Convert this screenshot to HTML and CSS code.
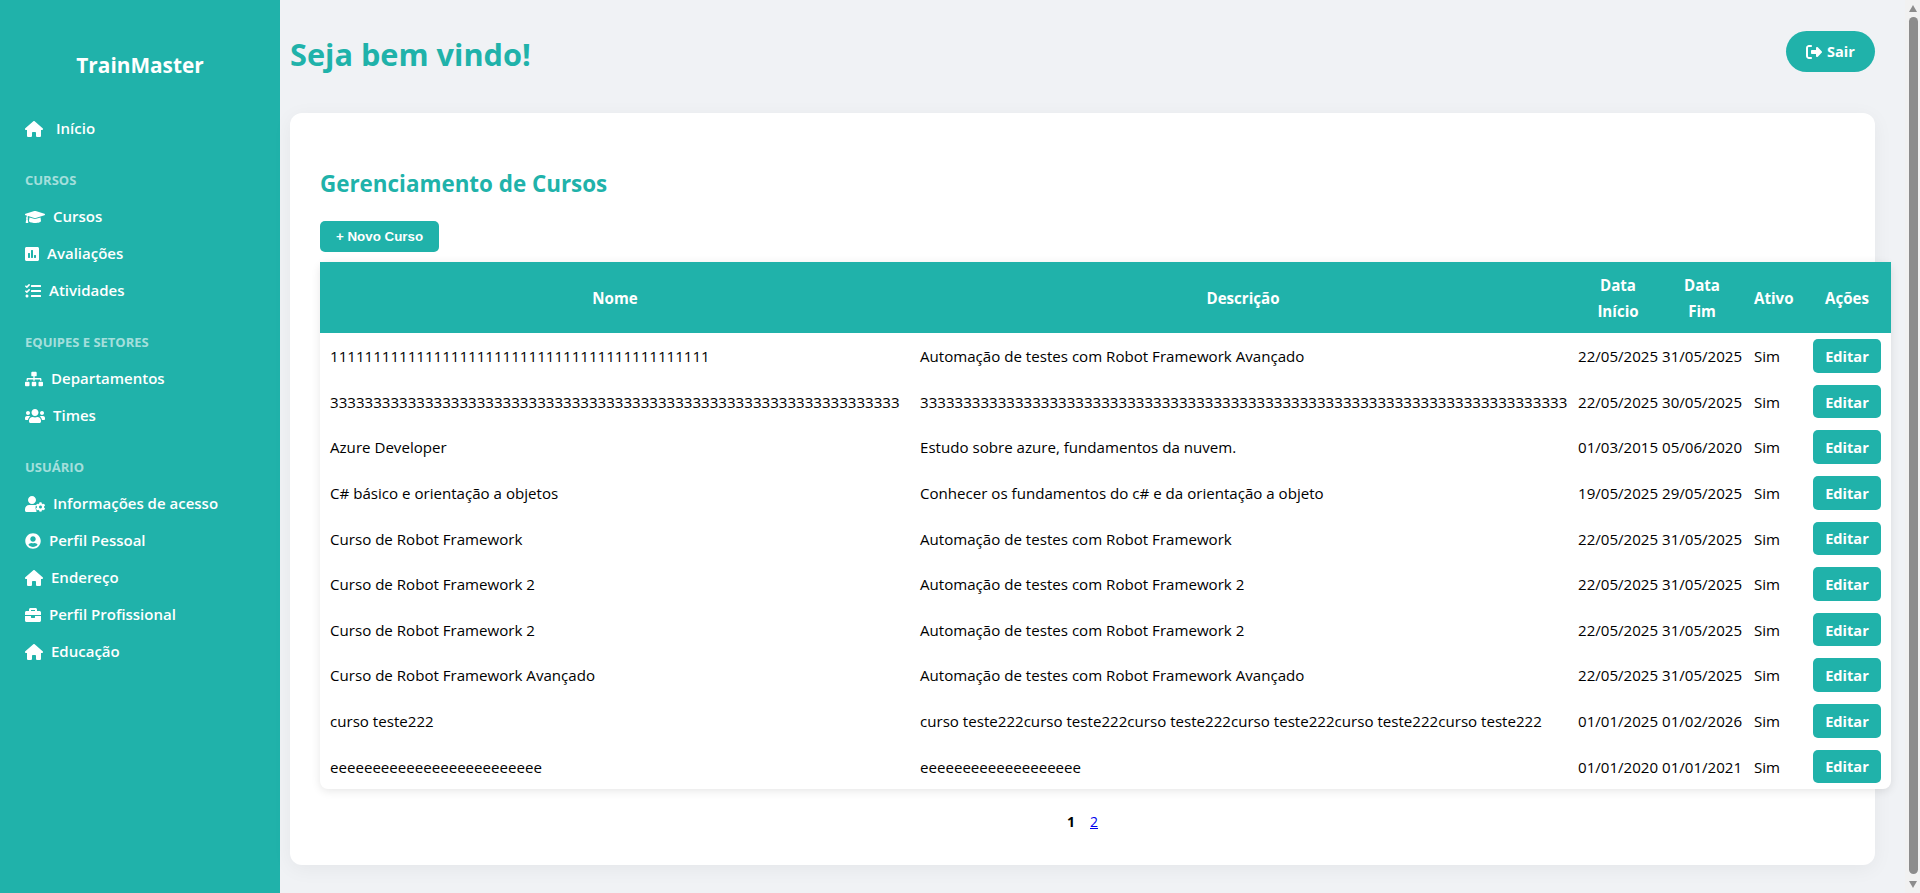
FILE: index.html
```html
<!DOCTYPE html>
<html lang="pt-br">
<head>
    <meta charset="UTF-8">
    <meta name="viewport" content="width=device-width, initial-scale=1.0">
    <title>TrainMaster - Cursos</title>
    <link rel="stylesheet" href="styles.css">
</head>
<body>
    <svg class="sprite" xmlns="http://www.w3.org/2000/svg">
        <symbol id="i-home" viewBox="0 0 576 512"><path d="M575.8 255.5c0 18-15 32.1-32 32.1h-32l.7 160.2c0 2.7-.2 5.4-.5 8.1V472c0 22.1-17.9 40-40 40H456c-1.1 0-2.2 0-3.3-.1c-1.4 .1-2.8 .1-4.2 .1H416 392c-22.1 0-40-17.9-40-40V448 384c0-17.7-14.3-32-32-32H256c-17.7 0-32 14.3-32 32v64 24c0 22.1-17.9 40-40 40H160 128.1c-1.5 0-3-.1-4.5-.2c-1.2 .1-2.4 .2-3.6 .2H104c-22.1 0-40-17.9-40-40V360c0-.9 0-1.9 .1-2.8V287.6H32c-18 0-32-14-32-32.1c0-9 3-17 10-24L266.4 8c7-7 15-8 22-8s15 2 21 7L564.8 231.5c8 7 12 15 11 24z"/></symbol>
        <symbol id="i-cap" viewBox="0 0 640 512"><path d="M622.34 153.2L343.4 67.5c-15.2-4.67-31.6-4.67-46.79 0L17.66 153.2c-23.54 7.23-23.54 38.36 0 45.59l48.63 14.94c-10.67 13.19-17.23 29.28-17.88 46.9C38.78 266.15 32 276.11 32 288c0 10.78 5.68 19.85 13.86 25.65L20.33 428.53C18.11 438.52 25.71 448 35.94 448h56.11c10.24 0 17.84-9.48 15.62-19.47L82.14 313.65C90.32 307.85 96 298.78 96 288c0-11.57-6.47-21.25-15.66-26.87.76-15.02 8.44-28.3 20.69-36.72L296.6 284.5c9.06 2.78 26.44 6.25 46.79 0l278.95-85.7c23.55-7.24 23.55-38.36 0-45.6zM352.79 315.09c-28.53 8.76-52.84 3.92-65.59 0l-145.02-44.55L128 384c0 35.35 85.96 64 192 64s192-28.65 192-64l-14.18-113.47-145.03 44.56z"/></symbol>
        <symbol id="i-poll" viewBox="0 0 448 512"><path d="M400 32H48C21.5 32 0 53.5 0 80v352c0 26.5 21.5 48 48 48h352c26.5 0 48-21.5 48-48V80c0-26.5-21.5-48-48-48zM160 368c0 8.84-7.16 16-16 16h-32c-8.84 0-16-7.16-16-16V240c0-8.84 7.16-16 16-16h32c8.84 0 16 7.16 16 16v128zm96 0c0 8.84-7.16 16-16 16h-32c-8.84 0-16-7.16-16-16V144c0-8.84 7.16-16 16-16h32c8.84 0 16 7.16 16 16v224zm96 0c0 8.84-7.16 16-16 16h-32c-8.84 0-16-7.16-16-16v-64c0-8.84 7.16-16 16-16h32c8.84 0 16 7.16 16 16v64z"/></symbol>
        <symbol id="i-tasks" viewBox="0 0 512 512"><path d="M139.61 35.5a12 12 0 0 0-17 0L58.93 98.81l-22.7-22.12a12 12 0 0 0-17 0L3.53 92.41a12 12 0 0 0 0 17l47.59 47.4a12.78 12.78 0 0 0 17.61 0l15.59-15.62L156.52 69a12.09 12.09 0 0 0 .09-17zm0 159.19a12 12 0 0 0-17 0l-63.68 63.72-22.7-22.1a12 12 0 0 0-17 0L3.53 252a12 12 0 0 0 0 17L51 316.5a12.77 12.77 0 0 0 17.6 0l15.7-15.69 72.2-72.22a12 12 0 0 0 .09-16.9zM64 368c-26.49 0-48.59 21.5-48.59 48S37.53 464 64 464a48 48 0 0 0 0-96zm432 16H208a16 16 0 0 0-16 16v32a16 16 0 0 0 16 16h288a16 16 0 0 0 16-16v-32a16 16 0 0 0-16-16zm0-320H208a16 16 0 0 0-16 16v32a16 16 0 0 0 16 16h288a16 16 0 0 0 16-16V80a16 16 0 0 0-16-16zm0 160H208a16 16 0 0 0-16 16v32a16 16 0 0 0 16 16h288a16 16 0 0 0 16-16v-32a16 16 0 0 0-16-16z"/></symbol>
        <symbol id="i-sitemap" viewBox="0 0 640 512"><path d="M128 352H32c-17.67 0-32 14.33-32 32v96c0 17.67 14.33 32 32 32h96c17.67 0 32-14.33 32-32v-96c0-17.67-14.33-32-32-32zm-24-80h192v48h48v-48h192v48h48v-57.59c0-21.17-17.23-38.41-38.41-38.41H344v-64h40c17.67 0 32-14.33 32-32V32c0-17.67-14.33-32-32-32H256c-17.67 0-32 14.33-32 32v96c0 17.67 14.33 32 32 32h40v64H94.41C73.23 224 56 241.23 56 262.41V320h48v-48zm264 80h-96c-17.67 0-32 14.33-32 32v96c0 17.67 14.33 32 32 32h96c17.67 0 32-14.33 32-32v-96c0-17.67-14.33-32-32-32zm240 0h-96c-17.67 0-32 14.33-32 32v96c0 17.67 14.33 32 32 32h96c17.67 0 32-14.33 32-32v-96c0-17.67-14.33-32-32-32z"/></symbol>
        <symbol id="i-users" viewBox="0 0 640 512"><path d="M96 224c35.3 0 64-28.7 64-64s-28.7-64-64-64-64 28.7-64 64 28.7 64 64 64zm448 0c35.3 0 64-28.7 64-64s-28.7-64-64-64-64 28.7-64 64 28.7 64 64 64zm32 32h-64c-17.6 0-33.5 7.1-45.1 18.6 40.3 22.1 68.9 62 75.1 109.4h66c17.7 0 32-14.3 32-32v-32c0-35.3-28.7-64-64-64zm-256 0c61.9 0 112-50.1 112-112S381.9 32 320 32 208 82.1 208 144s50.1 112 112 112zm76.8 32h-8.3c-20.8 10-43.9 16-68.5 16s-47.6-6-68.5-16h-8.3C179.6 288 128 339.6 128 403.2V432c0 26.5 21.5 48 48 48h288c26.5 0 48-21.5 48-48v-28.8c0-63.6-51.6-115.2-115.2-115.2zm-223.7-13.4C161.5 263.1 145.6 256 128 256H64c-35.3 0-64 28.7-64 64v32c0 17.7 14.3 32 32 32h65.9c6.3-47.4 34.9-87.3 75.2-109.4z"/></symbol>
        <symbol id="i-usercog" viewBox="0 0 640 512"><path d="M610.5 373.3c2.6-14.1 2.6-28.5 0-42.6l25.8-14.9c3-1.7 4.3-5.2 3.3-8.5-6.7-21.6-18.2-41.2-33.2-57.4-2.3-2.5-6-3.1-9-1.4l-25.8 14.9c-10.9-9.3-23.4-16.5-36.9-21.3v-29.8c0-3.4-2.4-6.4-5.7-7.1-22.3-5-45-4.8-66.2 0-3.3.7-5.7 3.7-5.7 7.1v29.8c-13.5 4.8-26 12-36.9 21.3l-25.8-14.9c-2.9-1.7-6.7-1.1-9 1.4-15 16.2-26.5 35.8-33.2 57.4-1 3.3.4 6.8 3.3 8.5l25.8 14.9c-2.6 14.1-2.6 28.5 0 42.6l-25.8 14.9c-3 1.7-4.3 5.2-3.3 8.5 6.7 21.6 18.2 41.1 33.2 57.4 2.3 2.5 6 3.1 9 1.4l25.8-14.9c10.9 9.3 23.4 16.5 36.9 21.3v29.8c0 3.4 2.4 6.4 5.7 7.1 22.3 5 45 4.8 66.2 0 3.3-.7 5.7-3.7 5.7-7.1v-29.8c13.5-4.8 26-12 36.9-21.3l25.8 14.9c2.9 1.7 6.7 1.1 9-1.4 15-16.2 26.5-35.8 33.2-57.4 1-3.3-.4-6.8-3.3-8.5l-25.8-14.9zM496 400.5c-26.8 0-48.5-21.8-48.5-48.5s21.8-48.5 48.5-48.5 48.5 21.8 48.5 48.5-21.7 48.5-48.5 48.5zM224 256c70.7 0 128-57.3 128-128S294.7 0 224 0 96 57.3 96 128s57.3 128 128 128zM134.4 288h178c20 0 30 4 45 11-8 18-14 33-20 53 3 18 3 30 0 48 6 22 14 37 26 54v26c0 12 3 22 8 32H48c-26.5 0-48-21.5-48-48v-41.6C0 348.2 60.2 288 134.4 288z"/></symbol>
        <symbol id="i-usercircle" viewBox="0 0 496 512"><path d="M248 8C111 8 0 119 0 256s111 248 248 248 248-111 248-248S385 8 248 8zm0 96c48.6 0 88 39.4 88 88s-39.4 88-88 88-88-39.4-88-88 39.4-88 88-88zm0 344c-58.7 0-111.3-26.6-146.5-68.2 18.8-35.4 55.6-59.8 98.5-59.8 2.4 0 4.8.4 7.1 1.1 13 4.2 26.6 6.9 40.9 6.9 14.3 0 28-2.7 40.9-6.9 2.3-.7 4.7-1.1 7.1-1.1 42.9 0 79.7 24.4 98.5 59.8C359.3 421.4 306.7 448 248 448z"/></symbol>
        <symbol id="i-briefcase" viewBox="0 0 512 512"><path d="M320 336c0 8.84-7.16 16-16 16h-96c-8.84 0-16-7.16-16-16v-48H0v144c0 25.6 22.4 48 48 48h416c25.6 0 48-22.4 48-48V288H320v48zm144-208h-80V80c0-25.6-22.4-48-48-48H176c-25.6 0-48 22.4-48 48v48H48c-25.6 0-48 22.4-48 48v80h512v-80c0-25.6-22.4-48-48-48zm-144 0H192V96h128v32z"/></symbol>
        <symbol id="i-signout" viewBox="0 0 512 512"><path d="M377.9 105.9L500.7 228.7c7.2 7.2 11.3 17.1 11.3 27.3s-4.1 20.1-11.3 27.3L377.9 406.1c-6.4 6.4-15 9.9-24 9.9c-18.7 0-33.9-15.2-33.9-33.9l0-62.1-128 0c-17.7 0-32-14.3-32-32l0-64c0-17.7 14.3-32 32-32l128 0 0-62.1c0-18.7 15.2-33.9 33.9-33.9c9 0 17.6 3.6 24 9.9zM160 96L96 96c-17.7 0-32 14.3-32 32l0 256c0 17.7 14.3 32 32 32l64 0c17.7 0 32 14.3 32 32s-14.3 32-32 32l-64 0c-53 0-96-43-96-96L0 128C0 75 43 32 96 32l64 0c17.7 0 32 14.3 32 32s-14.3 32-32 32z"/></symbol>
    </svg>

    <aside class="sidebar">
        <div class="brand">TrainMaster</div>
        <nav>
            <a class="nav-item nav-home" href="#"><svg class="ico w18"><use href="#i-home"/></svg>Início</a>

            <div class="nav-label">CURSOS</div>
            <a class="nav-item" href="#"><svg class="ico w20"><use href="#i-cap"/></svg>Cursos</a>
            <a class="nav-item" href="#"><svg class="ico w14"><use href="#i-poll"/></svg>Avaliações</a>
            <a class="nav-item" href="#"><svg class="ico w16"><use href="#i-tasks"/></svg>Atividades</a>

            <div class="nav-label">EQUIPES E SETORES</div>
            <a class="nav-item" href="#"><svg class="ico w18"><use href="#i-sitemap"/></svg>Departamentos</a>
            <a class="nav-item" href="#"><svg class="ico w20"><use href="#i-users"/></svg>Times</a>

            <div class="nav-label">USUÁRIO</div>
            <a class="nav-item" href="#"><svg class="ico w20"><use href="#i-usercog"/></svg>Informações de acesso</a>
            <a class="nav-item" href="#"><svg class="ico w16"><use href="#i-usercircle"/></svg>Perfil Pessoal</a>
            <a class="nav-item" href="#"><svg class="ico w18"><use href="#i-home"/></svg>Endereço</a>
            <a class="nav-item" href="#"><svg class="ico w16"><use href="#i-briefcase"/></svg>Perfil Profissional</a>
            <a class="nav-item" href="#"><svg class="ico w18"><use href="#i-home"/></svg>Educação</a>
        </nav>
    </aside>

    <main class="main">
        <header class="topbar">
            <h1>Seja bem vindo!</h1>
            <button class="btn-sair"><svg class="ico-sair"><use href="#i-signout"/></svg>Sair</button>
        </header>

        <section class="card">
            <h2>Gerenciamento de Cursos</h2>
            <button class="btn-novo">+ Novo Curso</button>

            <table class="tabela">
                <colgroup>
                    <col class="c-nome"><col class="c-desc"><col class="c-data"><col class="c-data"><col class="c-ativo"><col class="c-acoes">
                </colgroup>
                <thead>
                    <tr>
                        <th>Nome</th>
                        <th>Descrição</th>
                        <th class="th-data">Data Início</th>
                        <th class="th-data">Data Fim</th>
                        <th>Ativo</th>
                        <th>Ações</th>
                    </tr>
                </thead>
                <tbody>
                    <tr><td>11111111111111111111111111111111111111111111</td><td>Automação de testes com Robot Framework Avançado</td><td class="data">22/05/2025</td><td class="data">31/05/2025</td><td>Sim</td><td><button class="btn-editar">Editar</button></td></tr>
                    <tr><td>333333333333333333333333333333333333333333333333333333333333333333</td><td>333333333333333333333333333333333333333333333333333333333333333333333333333</td><td class="data">22/05/2025</td><td class="data">30/05/2025</td><td>Sim</td><td><button class="btn-editar">Editar</button></td></tr>
                    <tr><td>Azure Developer</td><td>Estudo sobre azure, fundamentos da nuvem.</td><td class="data">01/03/2015</td><td class="data">05/06/2020</td><td>Sim</td><td><button class="btn-editar">Editar</button></td></tr>
                    <tr><td>C# básico e orientação a objetos</td><td>Conhecer os fundamentos do c# e da orientação a objeto</td><td class="data">19/05/2025</td><td class="data">29/05/2025</td><td>Sim</td><td><button class="btn-editar">Editar</button></td></tr>
                    <tr><td>Curso de Robot Framework</td><td>Automação de testes com Robot Framework</td><td class="data">22/05/2025</td><td class="data">31/05/2025</td><td>Sim</td><td><button class="btn-editar">Editar</button></td></tr>
                    <tr><td>Curso de Robot Framework 2</td><td>Automação de testes com Robot Framework 2</td><td class="data">22/05/2025</td><td class="data">31/05/2025</td><td>Sim</td><td><button class="btn-editar">Editar</button></td></tr>
                    <tr><td>Curso de Robot Framework 2</td><td>Automação de testes com Robot Framework 2</td><td class="data">22/05/2025</td><td class="data">31/05/2025</td><td>Sim</td><td><button class="btn-editar">Editar</button></td></tr>
                    <tr><td>Curso de Robot Framework Avançado</td><td>Automação de testes com Robot Framework Avançado</td><td class="data">22/05/2025</td><td class="data">31/05/2025</td><td>Sim</td><td><button class="btn-editar">Editar</button></td></tr>
                    <tr><td>curso teste222</td><td>curso teste222curso teste222curso teste222curso teste222curso teste222curso teste222</td><td class="data">01/01/2025</td><td class="data">01/02/2026</td><td>Sim</td><td><button class="btn-editar">Editar</button></td></tr>
                    <tr><td>eeeeeeeeeeeeeeeeeeeeeeeee</td><td>eeeeeeeeeeeeeeeeeee</td><td class="data">01/01/2020</td><td class="data">01/01/2021</td><td>Sim</td><td><button class="btn-editar">Editar</button></td></tr>
                </tbody>
            </table>

            <div class="paginacao">
                <strong>1</strong>
                <a href="#">2</a>
            </div>
        </section>
    </main>

    <div class="scrollbar">
        <span class="seta seta-cima"></span>
        <span class="thumb"></span>
        <span class="seta seta-baixo"></span>
    </div>
</body>
</html>
```

FILE: styles.css
```css
* {
    box-sizing: border-box;
}
html, body {
    height: 100%;
}
body {
    margin: 0;
    display: flex;
    height: 893px;
    overflow: hidden;
    background-color: #f0f2f5;
    font-family: "Open Sans", "Noto Sans", sans-serif;
    font-size: 15.1px;
    line-height: 25.6px;
    color: #000;
}
.sprite {
    display: none;
}

/* menu lateral */
.sidebar {
    width: 280px;
    flex-shrink: 0;
    background-color: #20b2aa;
    color: #fff;
    padding: 0 25px;
}
.brand {
    height: 109px;
    padding-top: 51px;
    text-align: center;
    font-size: 20.8px;
    font-weight: 700;
    line-height: 28px;
}
.nav-item {
    display: flex;
    align-items: center;
    height: 37px;
    padding-top: 2px;
    color: #fff;
    font-size: 15px;
    font-weight: 600;
    text-decoration: none;
}
.nav-home {
    margin-bottom: 17px;
}
.nav-home .ico {
    margin-right: 13px;
}
.nav-label {
    height: 34px;
    line-height: 34px;
    font-size: 13px;
    font-weight: 700;
    color: rgba(255, 255, 255, 0.6);
}
.nav-item + .nav-label {
    margin-top: 17px;
}
.nav-home + .nav-label {
    margin-top: 0;
}
.ico {
    height: 16px;
    margin-right: 8px;
    fill: #fff;
    flex-shrink: 0;
}
.w14 { width: 14px; }
.w16 { width: 16px; }
.w18 { width: 18px; }
.w20 { width: 20px; }

/* conteudo */
.main {
    flex: 1;
    min-width: 0;
    padding: 0 30px 0 10px;
}
.topbar {
    height: 113px;
    padding-bottom: 10px;
    display: flex;
    align-items: center;
    justify-content: space-between;
}
h1 {
    margin: 4px 0 0;
    color: #20b2aa;
    font-size: 30.7px;
    font-weight: 700;
    line-height: 40px;
}
.btn-sair {
    display: flex;
    align-items: center;
    justify-content: center;
    gap: 5px;
    width: 89px;
    height: 41px;
    border: 0;
    border-radius: 21px;
    background-color: #20b2aa;
    color: #fff;
    font-family: inherit;
    font-size: 14.5px;
    font-weight: 700;
}
.ico-sair {
    width: 16px;
    height: 16px;
    fill: #fff;
}
.card {
    height: 752px;
    padding: 30px;
    background-color: #fff;
    border-radius: 12px;
    box-shadow: 0 4px 20px rgba(0, 0, 0, 0.05);
}
h2 {
    margin: 22px 0 18px;
    color: #20b2aa;
    font-size: 22.4px;
    font-weight: 700;
    line-height: 38px;
}
.btn-novo {
    display: block;
    height: 31px;
    padding: 0 16px;
    border: 0;
    border-radius: 5px;
    background-color: #20b2aa;
    color: #fff;
    font-family: "Liberation Sans", Arial, sans-serif;
    font-size: 13.33px;
    font-weight: 700;
}

/* tabela */
.tabela {
    width: 1571px;
    margin-top: 10px;
    table-layout: fixed;
    border-collapse: collapse;
    background-color: #fff;
    border-radius: 8px;
    box-shadow: 0 2px 10px rgba(0, 0, 0, 0.1);
}
.c-nome { width: 590px; }
.c-desc { width: 666px; }
.c-data { width: 84px; }
.c-ativo { width: 59px; }
.c-acoes { width: 88px; }
th {
    padding: 11px 10px 9px;
    background-color: #20b2aa;
    color: #fff;
    font-weight: 700;
    text-align: center;
}
th.th-data {
    padding: 11px 20px 9px;
}
td {
    padding: 7px 10px 5px;
    white-space: nowrap;
}
td.data {
    padding: 7px 2px 5px;
}
td:last-child {
    padding: 6px 10px;
}
.btn-editar {
    display: block;
    width: 68px;
    height: 33.6px;
    border: 0;
    border-radius: 5px;
    background-color: #20b2aa;
    color: #fff;
    font-family: inherit;
    font-size: 14.6px;
    font-weight: 700;
}
.paginacao {
    display: flex;
    justify-content: center;
    gap: 15px;
    margin-top: 20px;
    font-size: 14px;
}
.paginacao a {
    color: #0000ee;
}

/* barra de rolagem */
.scrollbar {
    width: 15px;
    flex-shrink: 0;
    display: flex;
    flex-direction: column;
    align-items: center;
    background-color: #f1f1f1;
}
.thumb {
    flex: 1;
    width: 9px;
    margin-left: 1px;
    border-radius: 5px;
    background-color: #8c8c8c;
}
.seta {
    width: 0;
    height: 0;
    margin-left: 1px;
    border-left: 4.5px solid transparent;
    border-right: 4.5px solid transparent;
}
.seta-cima {
    margin-top: 5px;
    margin-bottom: 5px;
    border-bottom: 7px solid #8c8c8c;
}
.seta-baixo {
    margin-top: 7px;
    margin-bottom: 5px;
    border-top: 7px solid #8c8c8c;
}
```
